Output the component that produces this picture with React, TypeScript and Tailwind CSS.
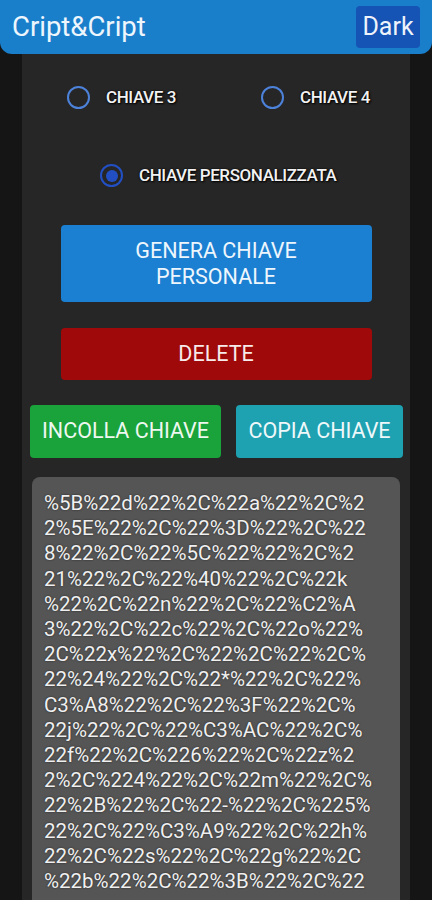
const keyLines = [
  '%5B%22d%22%2C%22a%22%2C%2',
  '2%5E%22%2C%22%3D%22%2C%22',
  '8%22%2C%22%5C%22%22%2C%2',
  '21%22%2C%22%40%22%2C%22k',
  '%22%2C%22n%22%2C%22%C2%A',
  '3%22%2C%22c%22%2C%22o%22%',
  '2C%22x%22%2C%22%2C%22%2C%',
  '22%24%22%2C%22*%22%2C%22%',
  'C3%A8%22%2C%22%3F%22%2C%',
  '22j%22%2C%22%C3%AC%22%2C%',
  '22f%22%2C%226%22%2C%22z%2',
  '2%2C%224%22%2C%22m%22%2C%',
  '22%2B%22%2C%22-%22%2C%225%',
  '22%2C%22%C3%A9%22%2C%22h%',
  '22%2C%22s%22%2C%22g%22%2C',
  '%22b%22%2C%22%3B%22%2C%22',
];

const Radio = ({ label, checked }: { label: string; checked?: boolean }) => (
  <div className="flex h-[23px] items-center gap-[16px] whitespace-nowrap">
    <span
      className={
        checked
          ? 'flex h-[23px] w-[23px] shrink-0 items-center justify-center rounded-full border-[2.5px] border-[#2250c4]'
          : 'h-[23px] w-[23px] shrink-0 rounded-full border-[2.5px] border-[#4d82db]'
      }
    >
      {checked && <span className="h-[12px] w-[12px] rounded-full bg-[#2250c4]" />}
    </span>
    <span className="text-[17px] leading-[23px] font-medium tracking-[-0.4px] text-[#f2f2f2] [text-shadow:0_0_2px_#000,1px_1px_2px_#000]">
      {label}
    </span>
  </div>
);

export default function App() {
  return (
    <div className="h-[900px] overflow-hidden bg-[#151515] font-['Roboto',sans-serif]">
      <header className="relative z-10 flex h-[54px] items-center justify-between rounded-b-[12px] bg-[#1a7fcb] pl-[12px] pr-[12px]">
        <h1 className="text-[27.5px] text-[#eef6fd]">Cript&amp;Cript</h1>
        <button
          type="button"
          className="flex h-[42px] w-[64px] items-center justify-center rounded-[4px] bg-[#1553b4] text-[25px] text-[#eef3fb]"
        >
          Dark
        </button>
      </header>
      <main className="-mt-[12px] mx-[22px] h-[858px] bg-[#262626] pt-[12px]">
        <div className="flex pt-[32px]">
          <div className="w-[194px] pl-[45px]">
            <Radio label="CHIAVE 3" />
          </div>
          <div className="pl-[45px]">
            <Radio label="CHIAVE 4" />
          </div>
        </div>
        <div className="mt-[55px] pl-[78px]">
          <Radio label="CHIAVE PERSONALIZZATA" checked />
        </div>
        <div className="mt-[38px] flex flex-col items-center gap-[26px]">
          <button
            type="button"
            className="flex h-[77px] w-[311px] items-center justify-center rounded-[4px] bg-[#1b80d1] text-[21.5px] leading-[26px] text-[#eef6fd]"
          >
            GENERA CHIAVE
            <br />
            PERSONALE
          </button>
          <button
            type="button"
            className="h-[52px] w-[311px] rounded-[4px] bg-[#9f0909] text-[21.5px] text-[#f7eaea]"
          >
            DELETE
          </button>
        </div>
        <div className="mt-[25px] flex gap-[15px] pl-[8px]">
          <button
            type="button"
            className="h-[53px] w-[191px] rounded-[4px] bg-[#19a33a] text-[21.5px] text-[#eef8f0]"
          >
            INCOLLA CHIAVE
          </button>
          <button
            type="button"
            className="h-[53px] w-[167px] rounded-[4px] bg-[#1ea1b1] text-[21.5px] text-[#eef8fa]"
          >
            COPIA CHIAVE
          </button>
        </div>
        <div className="mx-[10px] mt-[19px] h-[500px] rounded-t-[8px] bg-[#555555] px-[12px] pt-[14px]">
          {keyLines.map((line, i) => (
            <div
              key={i}
              className="whitespace-nowrap text-[20.5px] leading-[25.2px] text-[#f0f0f0] [text-shadow:0_0_2px_#222]"
            >
              {line}
            </div>
          ))}
        </div>
      </main>
    </div>
  );
}
